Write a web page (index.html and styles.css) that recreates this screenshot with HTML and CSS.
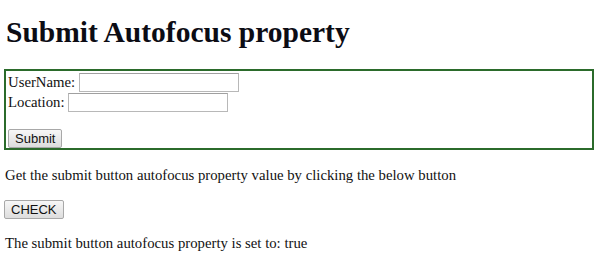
FILE: index.html
```html
<!DOCTYPE html>
<html lang="en">
<head>
    <meta charset="UTF-8">
    <title>Submit Autofocus property</title>
    <link rel="stylesheet" href="styles.css">
</head>
<body>
    <h1>Submit Autofocus property</h1>

    <form class="login-form" id="FORM1">
        <div class="row">UserName: <input type="text" class="field" name="usrN"></div>
        <div class="row">Location: <input type="text" class="field" name="location"></div>
        <div class="row submit-row"><input type="submit" class="btn" id="SUBMIT1" value="Submit" autofocus></div>
    </form>

    <p class="info">Get the submit button autofocus property value by clicking the below button</p>
    <button class="btn" onclick="checkFocus()">CHECK</button>
    <p class="info result" id="Sample">The submit button autofocus property is set to: true</p>

    <script>
        function checkFocus() {
            var f = document.getElementById("SUBMIT1").autofocus;
            document.getElementById("Sample").innerHTML = "The submit button autofocus property is set to: " + f;
        }
    </script>
</body>
</html>
```

FILE: styles.css
```css
body {
    margin: 0 6px 0 4px;
    font-family: "Liberation Serif", "Times New Roman", serif;
    font-size: 14.75px;
    color: #111;
    background: #fff;
}
h1 {
    font-size: 29.5px;
    font-weight: bold;
    line-height: 34px;
    margin: 15px 0 20px 2px;
    color: #0c0c14;
}
.login-form {
    border: 2px solid #2b6b2b;
    padding: 1px 0 0 2px;
}
.row {
    height: 20px;
    line-height: 20px;
}
.submit-row {
    margin-top: 17px;
    height: 19px;
    line-height: 19px;
}
.field {
    box-sizing: border-box;
    width: 160px;
    height: 19px;
    margin: 0;
    padding: 1px 2px;
    border: 1px solid #b8b8b8;
    border-top-color: #a0a0a0;
    background: #fff;
    font-family: "Liberation Sans", Arial, sans-serif;
    font-size: 12px;
    vertical-align: bottom;
}
.btn {
    box-sizing: border-box;
    height: 19px;
    padding: 0 6px;
    margin: 0;
    border: 1px solid #a8a8a8;
    border-radius: 2px;
    background: linear-gradient(#f7f7f7, #dddddd);
    font-family: "Liberation Sans", Arial, sans-serif;
    font-size: 13px;
    color: #111;
    vertical-align: bottom;
}
.btn:focus {
    outline: none;
}
.info {
    line-height: 17px;
    margin: 17px 0 16px 1px;
}
.result {
    margin-top: 16px;
}
```
